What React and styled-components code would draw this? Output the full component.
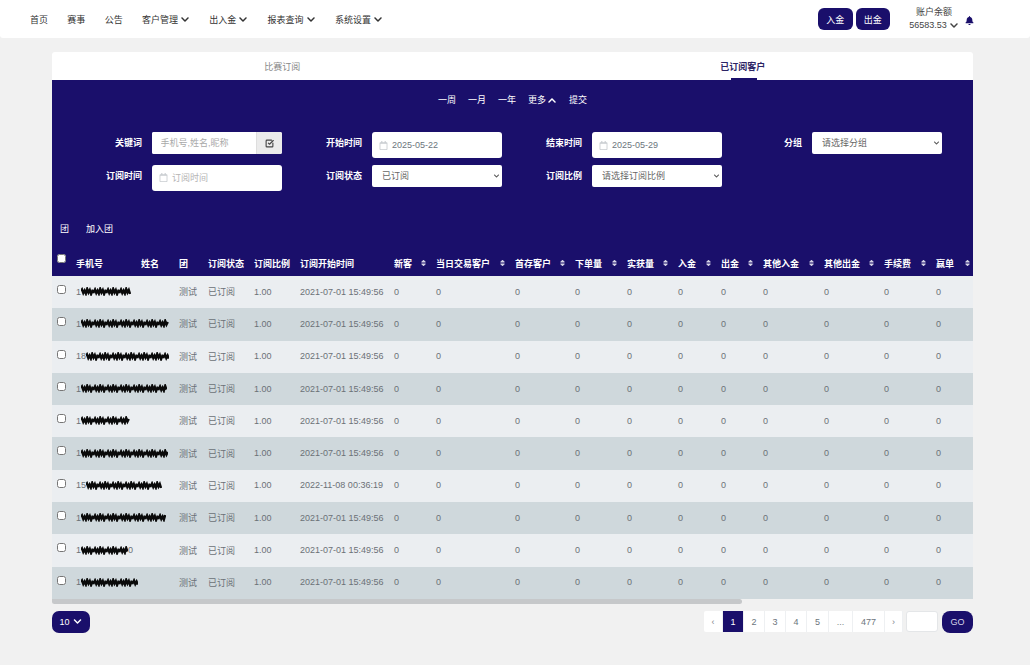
import React from 'react'
import styled, { createGlobalStyle } from 'styled-components'
import { FaBell, FaChevronDown, FaChevronUp, FaRegCalendar, FaSort } from 'react-icons/fa'
import { SquareCheckBig } from 'lucide-react'

const NAVY = '#1a0f6b'

const GlobalStyle = createGlobalStyle`
  html, body {
    margin: 0;
    height: 665px;
    overflow: hidden;
    background: #f1f1f1;
    font-family: "Liberation Sans", "Noto Sans CJK SC", sans-serif;
    font-size: 9px;
    color: #333;
  }
  * { box-sizing: border-box; }
`

const columns = [
  { key: 'check', width: 19 },
  { key: 'phone', label: '手机号', width: 65 },
  { key: 'name', label: '姓名', width: 38 },
  { key: 'team', label: '团', width: 29 },
  { key: 'status', label: '订阅状态', width: 46 },
  { key: 'ratio', label: '订阅比例', width: 46 },
  { key: 'start', label: '订阅开始时间', width: 94 },
  { key: 'c1', label: '新客', width: 42, sort: true },
  { key: 'c2', label: '当日交易客户', width: 79, sort: true },
  { key: 'c3', label: '首存客户', width: 60, sort: true },
  { key: 'c4', label: '下单量', width: 52, sort: true },
  { key: 'c5', label: '实获量', width: 51, sort: true },
  { key: 'c6', label: '入金', width: 43, sort: true },
  { key: 'c7', label: '出金', width: 42, sort: true },
  { key: 'c8', label: '其他入金', width: 61, sort: true },
  { key: 'c9', label: '其他出金', width: 60, sort: true },
  { key: 'c10', label: '手续费', width: 52, sort: true },
  { key: 'c11', label: '赢单', width: 44, sort: true },
]

const zeroColumns = columns.filter((c) => c.sort)

const rows = [
  { prefix: '1', ink: 50, start: '2021-07-01 15:49:56' },
  { prefix: '1', ink: 88, start: '2021-07-01 15:49:56' },
  { prefix: '18', ink: 83, start: '2021-07-01 15:49:56' },
  { prefix: '1', ink: 86, start: '2021-07-01 15:49:56' },
  { prefix: '1', ink: 49, start: '2021-07-01 15:49:56' },
  { prefix: '1', ink: 87, start: '2021-07-01 15:49:56' },
  { prefix: '15', ink: 76, start: '2022-11-08 00:36:19' },
  { prefix: '1', ink: 85, start: '2021-07-01 15:49:56' },
  { prefix: '1', ink: 47, tail: '0', start: '2021-07-01 15:49:56' },
  { prefix: '1', ink: 57, start: '2021-07-01 15:49:56' },
]

const Page = styled.div`
  width: 1030px;
  height: 665px;
`

const Nav = styled.header`
  height: 38px;
  background: #fff;
  border-radius: 0 0 3px 3px;
  display: flex;
  align-items: center;
  justify-content: space-between;
  padding: 0 56px 0 30px;
`

const NavLinks = styled.nav`
  display: flex;
  gap: 19.3px;
`

const NavLink = styled.a`
  display: flex;
  align-items: center;
  gap: 2px;
  color: #333;
  svg { width: 10px; height: 9px; }
`

const NavRight = styled.div`
  display: flex;
  align-items: center;
`

const CashButton = styled.button`
  width: 34.5px;
  height: 22px;
  margin-right: 3px;
  border: 0;
  border-radius: 6px;
  background: ${NAVY};
  color: #fff;
  font: inherit;
  padding: 0;
`

const Balance = styled.div`
  width: 60px;
  margin-left: 11px;
  text-align: center;
  line-height: 13px;
  color: #444;
  span {
    display: inline-flex;
    align-items: center;
    gap: 2px;
  }
  svg { width: 10px; height: 9px; }
`

const Bell = styled(FaBell)`
  width: 9px;
  height: 9px;
  margin: 3px 0 0 1px;
  color: ${NAVY};
`

const Card = styled.main`
  margin: 14px 57px 0 52px;
`

const Tabs = styled.div`
  display: flex;
  height: 28px;
  background: #fff;
  border-radius: 3px 3px 0 0;
`

const Tab = styled.div`
  flex: 1;
  position: relative;
  display: flex;
  align-items: center;
  justify-content: center;
  color: ${(p) => (p.$active ? '#2c2565' : '#888')};
  font-weight: ${(p) => (p.$active ? 600 : 400)};
  ${(p) => p.$active && `
    &::after {
      content: '';
      position: absolute;
      bottom: 0;
      left: 218px;
      width: 26px;
      height: 2px;
      background: ${NAVY};
    }
  `}
`

const Filters = styled.section`
  height: 170px;
  background: ${NAVY};
  color: #fff;
  padding-top: 13px;
`

const QuickLinks = styled.div`
  height: 14px;
  display: flex;
  justify-content: center;
  align-items: center;
  gap: 12px;
  line-height: 14px;
`

const QuickLink = styled.a`
  display: flex;
  align-items: center;
  gap: 1px;
  color: #fff;
  svg { width: 10px; height: 9px; }
`

const FormGrid = styled.div`
  display: grid;
  grid-template-columns: repeat(4, 220px);
  grid-auto-rows: 26px;
  row-gap: 6.5px;
  margin: 25px 0 0 10px;
`

const Field = styled.div`
  display: grid;
  grid-template-columns: 1fr 130px;
  column-gap: 10px;
  align-items: start;
`

const FieldLabel = styled.label`
  line-height: 22px;
  text-align: right;
  font-weight: 700;
`

const InputGroup = styled.div`
  display: flex;
  height: 22px;
  background: #fff;
  border-radius: 2px;
  overflow: hidden;
`

const TextInput = styled.input`
  flex: 1;
  min-width: 0;
  border: 0;
  padding: 0 8.5px;
  font: inherit;
  &::placeholder { color: #a9a9a9; }
`

const AddonButton = styled.div`
  width: 26px;
  display: flex;
  align-items: center;
  justify-content: center;
  background: #ebebeb;
  border-left: 1px solid #dedede;
  color: #444;
`

const DateBox = styled.div`
  height: 26px;
  display: flex;
  align-items: center;
  gap: 4px;
  padding: 0 7px;
  background: #fff;
  border-radius: 3px;
  color: ${(p) => (p.$empty ? '#b5b5b5' : '#6c757d')};
  svg { width: 9px; height: 9px; color: #c8ccd0; }
`

const SelectBox = styled.div`
  position: relative;
  height: 22px;
  svg {
    position: absolute;
    right: 2.5px;
    top: 8px;
    width: 7px;
    height: 6px;
    color: #555;
    pointer-events: none;
  }
`

const Select = styled.select`
  appearance: none;
  width: 100%;
  height: 22px;
  border: 0;
  border-radius: 2px;
  background: #fff;
  color: #666;
  font: inherit;
  padding-left: 10px;
`

const TeamActions = styled.div`
  display: flex;
  gap: 17px;
  margin: 31px 0 0 8px;
  line-height: 14px;
`

const TableScroll = styled.div`
  width: 921px;
  overflow: hidden;
`

const Table = styled.table`
  width: 1229px;
  table-layout: fixed;
  border-collapse: collapse;
`

const ScrollTrack = styled.div`
  height: 5px;
  background: #f1f1f1;
`

const ScrollThumb = styled.div`
  width: 690px;
  height: 5px;
  background: #c6c8ca;
  border-radius: 0 3px 3px 3px;
`

const HeadCell = styled.th`
  height: 26px;
  padding: 0 5px;
  background: ${NAVY};
  color: #fff;
  font-weight: 700;
  text-align: left;
  white-space: nowrap;
`

const HeadInner = styled.div`
  display: flex;
  justify-content: space-between;
  align-items: center;
  svg { width: 5px; height: 8px; color: #d5d3e6; }
`

const Row = styled.tr`
  height: 32.3px;
  background: ${(p) => (p.$even ? '#cfd8dc' : '#ebeef1')};
`

const Cell = styled.td`
  padding: 0 5px 1px;
  color: #6b7177;
  white-space: nowrap;
`

const CheckCell = styled.td`
  padding: 9px 0 0 5px;
  vertical-align: top;
`

const HeadCheckCell = styled.th`
  height: 26px;
  padding: 4px 0 0 5px;
  background: ${NAVY};
  vertical-align: top;
`

const Check = styled.input.attrs({ type: 'checkbox' })`
  display: block;
  width: 9px;
  height: 9px;
  margin: 0;
`

const PhoneInner = styled.span`
  display: inline-flex;
  align-items: center;
`

const Footer = styled.footer`
  display: flex;
  justify-content: space-between;
  align-items: flex-start;
  margin-top: 7px;
`

const SizeButton = styled.button`
  width: 38px;
  height: 22px;
  display: flex;
  align-items: center;
  justify-content: center;
  gap: 2px;
  border: 0;
  border-radius: 7px;
  background: ${NAVY};
  color: #fff;
  font: inherit;
  padding: 0;
  svg { width: 11px; height: 9px; }
`

const Pagination = styled.div`
  display: flex;
  align-items: center;
`

const Pages = styled.div`
  display: flex;
  height: 21px;
  background: #fff;
  border-radius: 2px;
  margin-right: 3px;
`

const PageItem = styled.a`
  width: ${(p) => p.$w}px;
  display: flex;
  align-items: center;
  justify-content: center;
  color: ${(p) => (p.$active ? '#fff' : p.$muted ? '#80858a' : '#6c757d')};
  background: ${(p) => (p.$active ? NAVY : 'transparent')};
  border-right: 1px solid #eef0f2;
`

const PageInput = styled.input`
  width: 32px;
  height: 21px;
  border: 1px solid #e4e6e8;
  border-radius: 3px;
  background: #fff;
  margin-right: 4px;
`

const GoButton = styled.button`
  width: 31px;
  height: 22px;
  border: 0;
  border-radius: 8px;
  background: ${NAVY};
  color: #d8d6ea;
  font: inherit;
  padding: 0;
`

// hand-drawn black marker over the redacted part of the number
const Scribble = ({ width }) => {
  let d = 'M0 4'
  for (let x = 1, i = 0; x < width; x += 1.3, i++) {
    const y = [2.5, 6, 3.5, 6.5, 2, 5.5, 3, 7, 4, 5][i % 10]
    d += ` L${x.toFixed(1)} ${y}`
  }
  return (
    <svg width={width} height="9" viewBox={`0 0 ${width} 9`}>
      <path d={d} fill="none" stroke="#0a0a0a" strokeWidth="2.4" />
    </svg>
  )
}

const DateField = ({ value, placeholder }) => (
  <DateBox $empty={!value}>
    <FaRegCalendar />
    {value || placeholder}
  </DateBox>
)

const SelectField = ({ label, children }) => (
  <Field>
    <FieldLabel>{label}</FieldLabel>
    <SelectBox>
      <Select>{children}</Select>
      <FaChevronDown />
    </SelectBox>
  </Field>
)

const App = () => {
  return (
    <Page>
      <GlobalStyle />
      <Nav>
        <NavLinks>
          <NavLink>首页</NavLink>
          <NavLink>赛事</NavLink>
          <NavLink>公告</NavLink>
          <NavLink>客户管理 <FaChevronDown /></NavLink>
          <NavLink>出入金 <FaChevronDown /></NavLink>
          <NavLink>报表查询 <FaChevronDown /></NavLink>
          <NavLink>系统设置 <FaChevronDown /></NavLink>
        </NavLinks>
        <NavRight>
          <CashButton>入金</CashButton>
          <CashButton>出金</CashButton>
          <Balance>
            账户余额
            <br />
            <span>56583.53 <FaChevronDown /></span>
          </Balance>
          <Bell />
        </NavRight>
      </Nav>

      <Card>
        <Tabs>
          <Tab>比赛订阅</Tab>
          <Tab $active>已订阅客户</Tab>
        </Tabs>

        <Filters>
          <QuickLinks>
            <QuickLink>一周</QuickLink>
            <QuickLink>一月</QuickLink>
            <QuickLink>一年</QuickLink>
            <QuickLink>更多 <FaChevronUp /></QuickLink>
            <QuickLink>提交</QuickLink>
          </QuickLinks>

          <FormGrid>
            <Field>
              <FieldLabel>关键词</FieldLabel>
              <InputGroup>
                <TextInput placeholder="手机号,姓名,昵称" />
                <AddonButton><SquareCheckBig size={9} strokeWidth={3} /></AddonButton>
              </InputGroup>
            </Field>
            <Field>
              <FieldLabel>开始时间</FieldLabel>
              <DateField value="2025-05-22" />
            </Field>
            <Field>
              <FieldLabel>结束时间</FieldLabel>
              <DateField value="2025-05-29" />
            </Field>
            <SelectField label="分组">
              <option>请选择分组</option>
            </SelectField>
            <Field>
              <FieldLabel>订阅时间</FieldLabel>
              <DateField placeholder="订阅时间" />
            </Field>
            <SelectField label="订阅状态">
              <option>已订阅</option>
            </SelectField>
            <SelectField label="订阅比例">
              <option>请选择订阅比例</option>
            </SelectField>
          </FormGrid>

          <TeamActions>
            <span>团</span>
            <span>加入团</span>
          </TeamActions>
        </Filters>

        <TableScroll>
          <Table>
            <colgroup>
              {columns.map((c) => <col key={c.key} width={c.width} />)}
              <col />
            </colgroup>
            <thead>
              <tr>
                <HeadCheckCell><Check /></HeadCheckCell>
                {columns.slice(1).map((c) => (
                  <HeadCell key={c.key}>
                    <HeadInner>
                      {c.label}
                      {c.sort && <FaSort />}
                    </HeadInner>
                  </HeadCell>
                ))}
                <HeadCell />
              </tr>
            </thead>
            <tbody>
              {rows.map((row, i) => (
                <Row key={i} $even={i % 2 === 1}>
                  <CheckCell><Check /></CheckCell>
                  <Cell>
                    <PhoneInner>
                      {row.prefix}
                      <Scribble width={row.ink} />
                      {row.tail}
                    </PhoneInner>
                  </Cell>
                  <Cell />
                  <Cell>测试</Cell>
                  <Cell>已订阅</Cell>
                  <Cell>1.00</Cell>
                  <Cell>{row.start}</Cell>
                  {zeroColumns.map((c) => <Cell key={c.key}>0</Cell>)}
                  <Cell />
                </Row>
              ))}
            </tbody>
          </Table>
        </TableScroll>
        <ScrollTrack>
          <ScrollThumb />
        </ScrollTrack>

        <Footer>
          <SizeButton>10 <FaChevronDown /></SizeButton>
          <Pagination>
            <Pages>
              <PageItem $w={19} $muted>‹</PageItem>
              <PageItem $w={21} $active>1</PageItem>
              <PageItem $w={21}>2</PageItem>
              <PageItem $w={21}>3</PageItem>
              <PageItem $w={21}>4</PageItem>
              <PageItem $w={22}>5</PageItem>
              <PageItem $w={24} $muted>...</PageItem>
              <PageItem $w={32}>477</PageItem>
              <PageItem $w={18} $muted>›</PageItem>
            </Pages>
            <PageInput />
            <GoButton>GO</GoButton>
          </Pagination>
        </Footer>
      </Card>
    </Page>
  )
}

export default App
